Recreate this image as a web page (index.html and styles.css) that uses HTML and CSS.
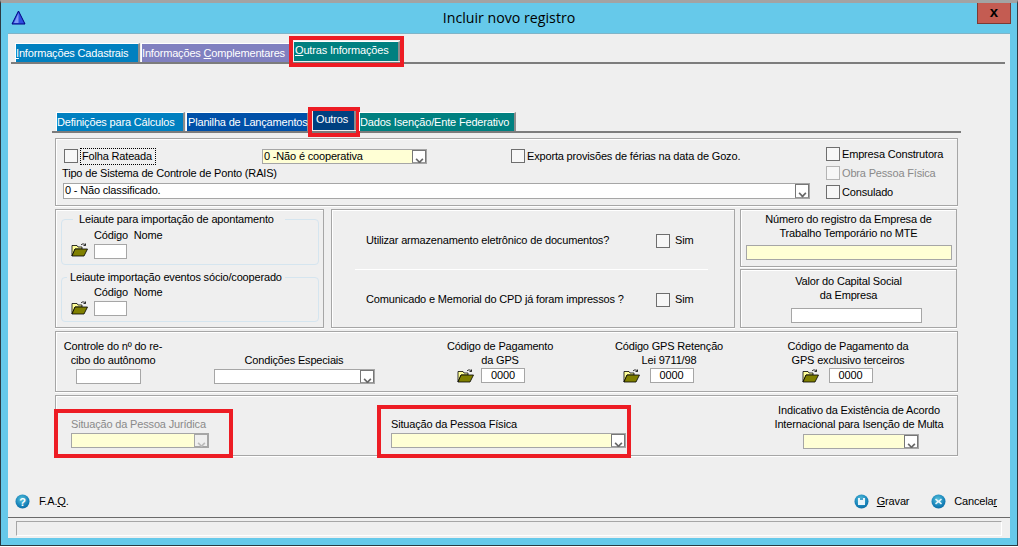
FILE: index.html
```html
<!DOCTYPE html>
<html lang="pt-BR">
<head>
<meta charset="utf-8">
<title>Incluir novo registro</title>
<link rel="stylesheet" href="styles.css">
</head>
<body>
<svg width="0" height="0" class="defs">
  <defs>
    <symbol id="folder" viewBox="0 0 17 14">
      <path d="M1 4V2.500h5l1 1.500h4V6H4L1 13z" fill="#ffff99" stroke="#000" stroke-width=".8"/>
      <path d="M1 13 4 6h12.500L13 13z" fill="#808000" stroke="#000" stroke-width=".8"/>
      <path d="M10 2C11 .5 13 .5 14.500 2M14.500 .5V2.500H12.500" fill="none" stroke="#000" stroke-width=".8"/>
    </symbol>
    <radialGradient id="orb" cx=".45" cy=".35" r=".7">
      <stop offset="0" stop-color="#58c4dc"/><stop offset=".7" stop-color="#1580b8"/><stop offset="1" stop-color="#0c6ba0"/>
    </radialGradient>
  </defs>
</svg>
<div class="window">
  <header class="titlebar">
    <svg class="logo" width="15" height="15" viewBox="0 0 15 15">
      <path d="M7.500 1 14 14H1z" fill="#2f4fe0" stroke="#000080"/>
      <path d="M7.500 3 7.500 13H3z" fill="#7f9bf5"/>
    </svg>
    <h1 class="title">Incluir novo registro</h1>
    <button class="close" type="button">x</button>
  </header>
  <main class="client">
    <nav class="tabs main-tabs">
      <a class="tab tab-blue t1"><u>I</u>nformações Cadastrais</a>
      <a class="tab tab-purple t2">Informações <u>C</u>omplementares</a>
      <a class="tab tab-teal t3 active marked"><u>O</u>utras Informações</a>
    </nav>
    <nav class="tabs sub-tabs">
      <a class="tab tab-blue s1">Definições para Cálculos</a>
      <a class="tab tab-royal s2">Planilha de Lançamentos</a>
      <a class="tab tab-navy s3 active marked">Outros</a>
      <a class="tab tab-teal s4">Dados Isenção/Ente Federativo</a>
    </nav>
    <form class="form">
      <section class="panel p-top">
        <div class="top-left">
          <div class="row-a">
            <span class="check first"></span><span class="focus-label">Folha Rateada</span>
            <div class="combo yellow coop"><span class="combo-text">0 -Não é cooperativa</span><i class="arrow"></i></div>
            <span class="check exporta"></span><span class="lbl">Exporta provisões de férias na data de Gozo.</span>
          </div>
          <div class="tipo-label">Tipo de Sistema de Controle de Ponto (RAIS)</div>
          <div class="combo tipo"><span class="combo-text">0 - Não classificado.</span><i class="arrow"></i></div>
        </div>
        <div class="top-right">
          <label class="chk"><span class="check"></span>Empresa Construtora</label>
          <label class="chk disabled"><span class="check"></span>Obra Pessoa Física</label>
          <label class="chk"><span class="check"></span>Consulado</label>
        </div>
      </section>
      <div class="middle">
        <section class="panel p-leiaute">
          <fieldset class="group g1">
            <legend>Leiaute para importação de apontamento</legend>
            <svg class="fold"><use href="#folder"/></svg>
            <div class="cod"><div class="cod-labels"><span>Código</span><span>Nome</span></div><div class="input small"></div></div>
          </fieldset>
          <fieldset class="group g2">
            <legend>Leiaute importação eventos sócio/cooperado</legend>
            <svg class="fold"><use href="#folder"/></svg>
            <div class="cod"><div class="cod-labels"><span>Código</span><span>Nome</span></div><div class="input small"></div></div>
          </fieldset>
        </section>
        <section class="panel p-questions">
          <div class="question"><span class="q-text">Utilizar armazenamento eletrônico de documentos?</span><span class="check"></span><span class="sim">Sim</span></div>
          <hr class="q-rule">
          <div class="question"><span class="q-text">Comunicado e Memorial do CPD já foram impressos ?</span><span class="check"></span><span class="sim">Sim</span></div>
        </section>
        <div class="side">
          <section class="panel p-side p-mte">
            <div class="center-label">Número do registro da Empresa de<br>Trabalho Temporário no MTE</div>
            <div class="input yellow wide"></div>
          </section>
          <section class="panel p-side p-cap">
            <div class="center-label">Valor do Capital Social<br>da Empresa</div>
            <div class="input capital"></div>
          </section>
        </div>
      </div>
      <section class="panel p-codes">
        <div class="code-col c1"><div class="center-label">Controle do nº do re-<br>cibo do autônomo</div><div class="input recibo"></div></div>
        <div class="code-col c2"><div class="center-label">Condições Especiais</div><div class="combo especial"><i class="arrow"></i></div></div>
        <div class="code-col c3"><div class="center-label">Código de Pagamento<br>da GPS</div><div class="code-line"><svg class="fold"><use href="#folder"/></svg><div class="input code">0000</div></div></div>
        <div class="code-col c4"><div class="center-label">Código GPS Retenção<br>Lei 9711/98</div><div class="code-line"><svg class="fold"><use href="#folder"/></svg><div class="input code">0000</div></div></div>
        <div class="code-col c5"><div class="center-label">Código de Pagamento da<br>GPS exclusivo terceiros</div><div class="code-line"><svg class="fold"><use href="#folder"/></svg><div class="input code">0000</div></div></div>
      </section>
      <section class="panel p-situ">
        <div class="situ juridica marked">
          <div class="situ-label">Situação da Pessoa Jurídica</div>
          <div class="combo yellow off"><i class="arrow"></i></div>
        </div>
        <div class="situ fisica marked">
          <div class="situ-label">Situação da Pessoa Física</div>
          <div class="combo yellow"><i class="arrow"></i></div>
        </div>
        <div class="situ acordo">
          <div class="center-label">Indicativo da Existência de Acordo<br>Internacional para Isenção de Multa</div>
          <div class="combo yellow"><i class="arrow"></i></div>
        </div>
      </section>
    </form>
    <footer class="actions">
      <a class="action faq">
        <svg width="15" height="15" viewBox="0 0 15 15"><circle cx="7.500" cy="7.500" r="7" fill="url(#orb)"/><text x="7.500" y="11.500" text-anchor="middle" class="glyph">?</text></svg>
        <span>F.A.<u>Q</u>.</span>
      </a>
      <a class="action gravar">
        <svg width="15" height="15" viewBox="0 0 15 15"><circle cx="7.500" cy="7.500" r="7" fill="url(#orb)"/><path d="M4 4h7v7H4z" fill="#e8f4fa"/><path d="M6 4h3v2H6z" fill="#4aa3cc"/></svg>
        <span><u>G</u>ravar</span>
      </a>
      <a class="action cancelar">
        <svg width="15" height="15" viewBox="0 0 15 15"><circle cx="7.500" cy="7.500" r="7" fill="url(#orb)"/><path d="M5 4.500 7.500 6.500 10 4.500 11 5.500 9 7.500 11 9.500 10 10.500 7.500 8.500 5 10.500 4 9.500 6 7.500 4 5.500z" fill="#e8f4fa"/></svg>
        <span>Cancela<u>r</u></span>
      </a>
    </footer>
    <div class="statusbar"><div class="status-field"></div></div>
  </main>
</div>
</body>
</html>
```
FILE: styles.css
```css
* { box-sizing: border-box; }
html, body { margin: 0; padding: 0; height: 547px; overflow: hidden; background: #fff; }
body { font: 11px/13px "Liberation Sans", Arial, sans-serif; color: #000; letter-spacing: -.17px; white-space: nowrap; }
.defs { position: absolute; }
u { text-decoration: underline; }

.window {
  width: 1018px; height: 546px; background: #66c9ea;
  border: 1px solid #2b3a42; border-top: 3px solid #a3a3a3;
  padding: 0 7px 7px 7px; display: flex; flex-direction: column;
}
.titlebar { height: 30px; flex: none; display: flex; position: relative; justify-content: center; }
.logo { position: absolute; left: 3px; top: 7px; }
.title { margin: 6px 0 0 0; font: 400 14.200px/18px "Open Sans", sans-serif; color: #000; letter-spacing: 0; }
.close {
  position: absolute; right: -1px; top: 0; width: 34px; height: 21px; padding: 0 0 3px;
  background: #c45c52; border: 1px solid #7b3a34; border-top: 0;
  font: 700 15px/14px "Liberation Sans", sans-serif; color: #000;
}

.client { flex: 1; background: #efefef; display: flex; flex-direction: column; border-top: 1px solid #7fb4c8; min-height: 0; }

.tabs { display: flex; align-items: flex-end; border-bottom: 2px solid #7c7c7c; }
.main-tabs { height: 30px; margin: 0 5px 0 3px; padding-left: 4px; }
.sub-tabs { height: 24px; margin: 45px 49px 0 44px; padding-left: 4px; }
.tab { height: 19px; padding: 3px 0 0 1px; color: #fff; white-space: nowrap; border-left: 1px solid #fff; border-top: 1px solid #fff; border-right: 2px solid #8c8c8c; position: relative; }
.tab-blue { background: #0080c0; }
.tab-purple { background: #8080c0; }
.tab-teal { background: #008080; }
.tab-royal { background: #0050a8; }
.tab-navy { background: #004080; }
.t1 { width: 125px; padding-left: 0; }
.t2 { width: 150px; margin-left: 1px; padding-left: 0; }
.t3 { width: 106px; margin-left: 3px; height: 20px; margin-bottom: 1px; padding-top: 2px; border-left: 0; padding-left: 1px; }
.s1 { width: 129px; padding-left: 0; }
.s2 { width: 123px; margin-left: 1px; }
.s3 { width: 43px; margin-left: 4px; height: 20px; margin-bottom: 1px; padding: 2px 0 0 3px; border-left: 0; }
.s4 { width: 157px; margin-left: 3px; padding-left: 0; }
.marked::after { content: ""; position: absolute; border: 4px solid #ed1c24; pointer-events: none; }
.t3::after { left: -5px; right: -6px; top: -6px; bottom: -6px; }
.s3::after { left: -5px; right: -6px; top: -4px; bottom: -7px; }

.form { margin: 5px 0 0 47px; width: 903px; display: flex; flex-direction: column; gap: 3px; }
.panel { border: 1px solid #a6a6a6; box-shadow: 0 1px 0 #fff, inset 1px 1px 0 #fff; position: relative; }
.p-top { height: 68px; display: flex; padding: 9px 0 0 7px; }
.top-left { width: 753px; }
.row-a { display: flex; align-items: center; height: 16px; }
.check { width: 14px; height: 14px; flex: none; background: #f7f7f7; border: 1px solid #6e6e6e; display: block; }
.check.first { margin-left: 1px; }
.focus-label { margin-left: 3px; padding: 0 1px; outline: 1px dotted #000; height: 15px; line-height: 15px; width: 74px; }
.combo { position: relative; height: 15px; background: #fff; border: 1px solid #a6a6a6; line-height: 13px; padding-left: 1px; white-space: nowrap; overflow: hidden; }
.combo.yellow { background: #ffffd5; }
.arrow { position: absolute; right: 0; top: 0; bottom: 0; width: 14px; background: #fff; border: 1px solid #777; border-bottom-color: #999; border-left-color: #777; }
.arrow::after { content: ""; position: absolute; left: 3px; top: 5px; width: 5px; height: 5px; border-right: 2px solid #666; border-bottom: 2px solid #666; transform: rotate(45deg) scale(.8); }
.off { background: #ffffd5; }
.off .arrow { border-color: #a6a6a6; background: #efefef; }
.off .arrow::after { border-color: #bbb; }
.coop { width: 165px; margin-left: 107px; }
.exporta { margin-left: 84px; }
.lbl { margin-left: 2px; }
.tipo-label { margin: 3px 0 0 -1px; height: 13px; }
.tipo { margin: 3px 0 0 0; width: 747px; height: 16px; }
.top-right { margin: -1px 0 0 10px; display: flex; flex-direction: column; gap: 5px; }
.chk { display: flex; align-items: center; gap: 2px; height: 14px; }
.disabled { color: #8a8a8a; }
.disabled .check { border-color: #b4b4b4; }

.middle { display: flex; height: 119px; }
.p-leiaute { width: 269px; padding: 3px 5px 0 5px; }
.group { margin: 0; padding: 0; border: 1px solid #d5e5ef; border-radius: 4px; width: 258px; position: relative; display: flex; }
.group legend { line-height: 13px; }
.g1 { height: 52px; margin-top: 0; }
.g1 legend { margin-left: 11px; padding: 0 11px 0 6px; }
.g2 { height: 51px; margin-top: 6px; }
.g2 legend { margin-left: 5px; padding: 0 3px; }
.group .fold { margin: 17px 0 0 9px; }
.fold { width: 17px; height: 14px; flex: none; }
.cod { margin: 0 0 0 6px; }
.cod-labels { display: flex; gap: 6px; height: 13px; margin: 0 0 2px 0; }
.input { background: #fff; border: 1px solid #a6a6a6; height: 15px; }
.small { width: 33px; }
.g1 .cod { margin-top: 3px; }
.g2 .cod { margin-top: 2px; }
.p-questions { width: 404px; margin-left: 7px; padding: 23px 0 0 34px; }
.question { display: flex; align-items: center; height: 15px; }
.q-text { width: 290px; }
.sim { margin-left: 5px; }
.q-rule { margin: 21px 0 22px -11px; width: 353px; height: 1px; border: 0; background: #fff; }
.side { width: 217px; margin-left: 5px; display: flex; flex-direction: column; gap: 2px; }
.p-side { text-align: center; }
.p-mte { height: 58px; padding-top: 2px; }
.p-cap { height: 59px; padding-top: 4px; }
.center-label { text-align: center; line-height: 14px; }
.wide { margin: 5px 4px 0 5px; height: 15px; background: #ffffd5; }
.capital { margin: 6px auto 0 50px; width: 131px; }

.p-codes { height: 61px; display: flex; padding-top: 7px; }
.code-col { flex: none; }
.c1 { width: 112px; margin-left: 2px; }
.c1 .center-label { width: 110px; }
.recibo { width: 65px; margin: 2px 0 0 18px; }
.c2 { width: 160px; margin-left: 44px; }
.c2 .center-label { margin-top: 14px; }
.especial { width: 161px; margin-top: 2px; height: 15px; }
.c3 { width: 120px; margin-left: 66px; }
.c4 { width: 120px; margin-left: 49px; }
.c5 { width: 130px; margin-left: 54px; }
.code-line { display: flex; gap: 10px; justify-content: center; align-items: center; margin-top: 1px; padding-right: 22px; }
.c3 .code-line { gap: 7px; padding-right: 18px; }
.code { width: 44px; text-align: center; height: 15px; line-height: 13px; }

.p-situ { height: 61px; display: flex; align-items: flex-start; }
.situ { position: relative; flex: none; }
.situ.juridica { width: 138px; margin: 22px 0 0 15px; }
.situ.fisica { width: 235px; margin: 22px 0 0 182px; }
.situ.acordo { width: 180px; margin: 7px 0 0 143px; }
.situ-label { height: 14px; margin-bottom: 1px; }
.juridica .situ-label { color: #8a8a8a; }
.juridica .combo { width: 138px; }
.fisica .combo { width: 235px; }
.acordo .combo { width: 116px; margin: 3px 0 0 34px; }
.juridica::after { left: -17px; right: -24px; top: -9px; bottom: -10px; }
.fisica::after { left: -14px; right: -5px; top: -13px; bottom: -10px; }

.actions { display: flex; align-items: center; height: 22px; margin-top: 34px; padding: 0 13px 0 7px; flex: none; }
.action { display: flex; align-items: center; gap: 8px; }
.glyph { font: 700 11px "Liberation Sans", sans-serif; fill: #fff; }
.faq { margin-right: auto; gap: 9px; }
.gravar { margin-right: 22px; }

.statusbar { flex: none; margin-top: 5px; border-top: 1px solid #6a6a6a; padding: 3px 8px 0 8px; height: 21px; }
.status-field { height: 15px; border: 1px solid #a6a6a6; border-right-color: #fff; border-bottom-color: #fff; }
```
